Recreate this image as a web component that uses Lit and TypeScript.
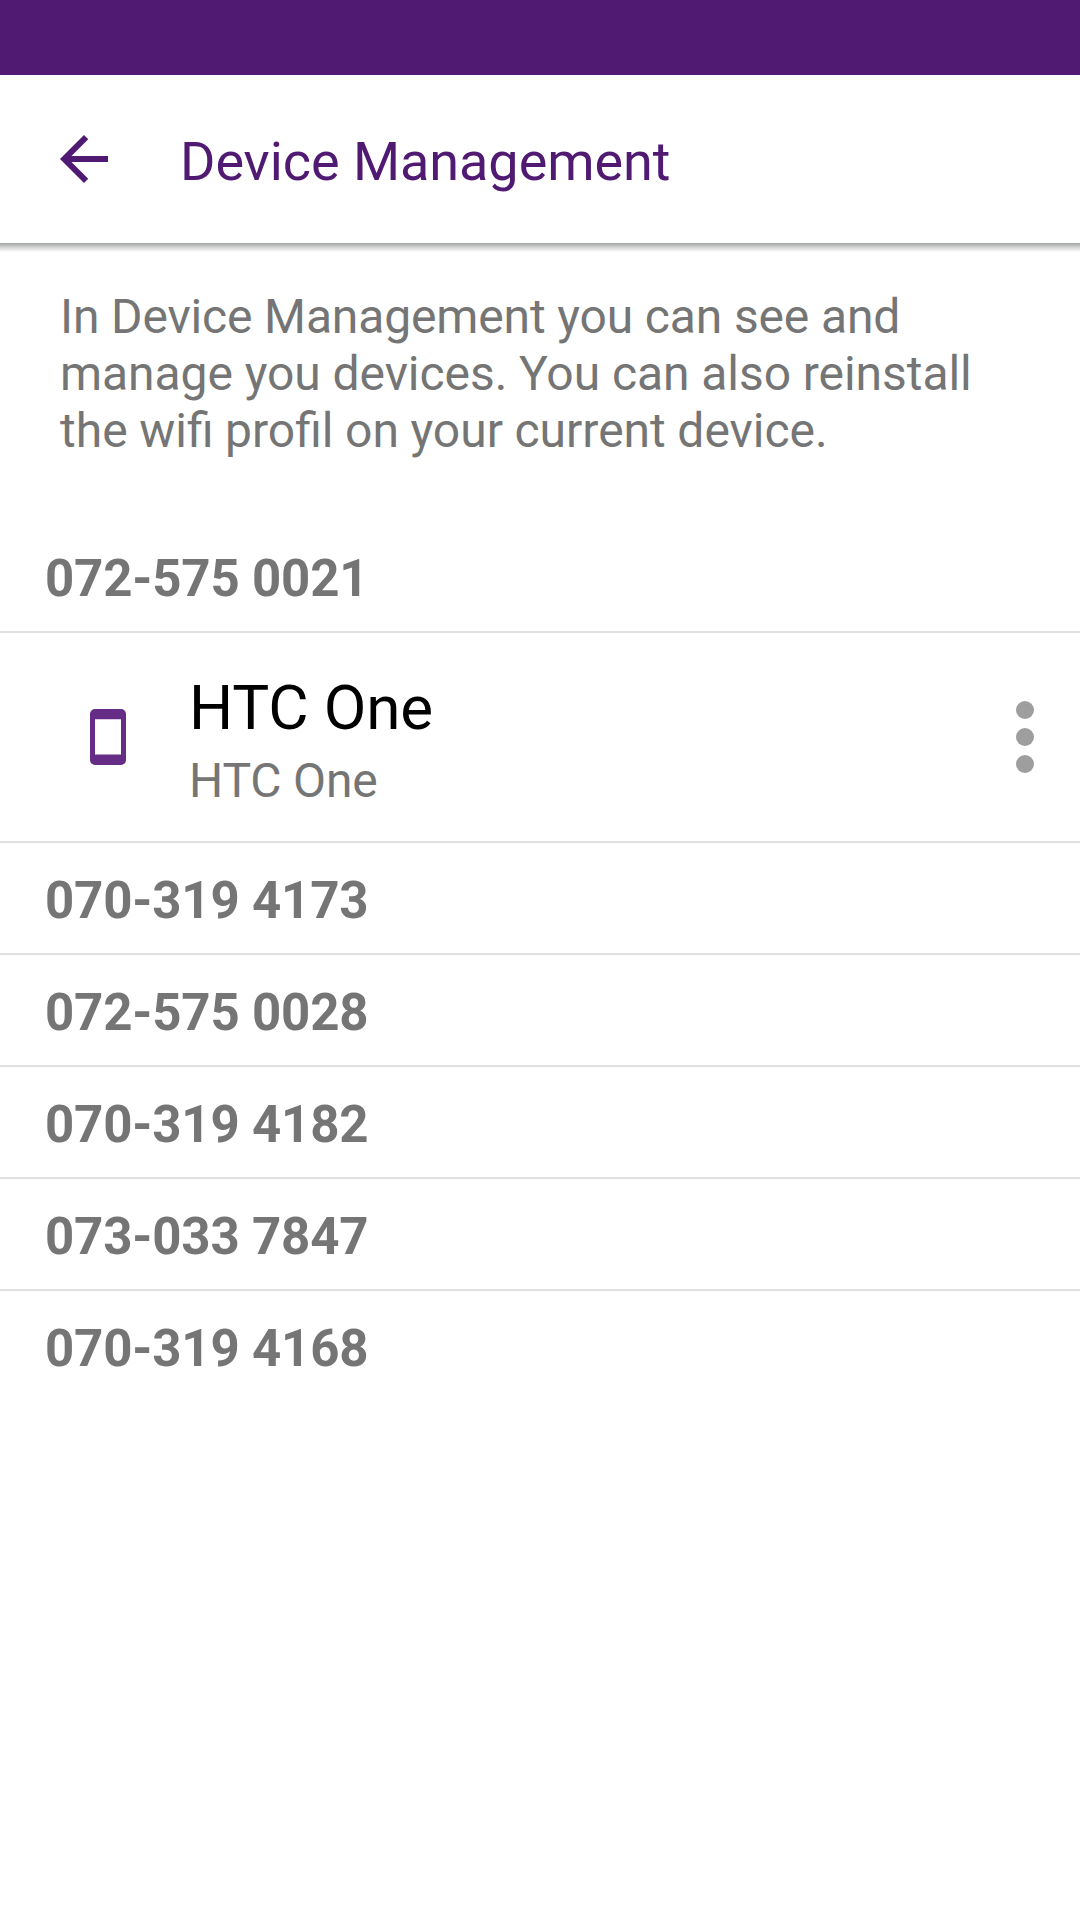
import { LitElement, html, css } from "lit";
import { customElement, state } from "lit/decorators.js";

interface Device {
  name: string;
  model: string;
}

interface Subscription {
  number: string;
  devices: Device[];
}

@customElement("app-root")
export class AppRoot extends LitElement {
  static styles = css`
    :host {
      display: flex;
      flex-direction: column;
      height: 1920px;
      background: #fff;
      color: #757575;
      font-family: Roboto, "Liberation Sans", sans-serif;
    }
    .status {
      height: 75px;
      flex: none;
      background: #501a72;
    }
    .toolbar {
      height: 168px;
      flex: none;
      display: flex;
      align-items: center;
      padding: 0 48px;
      box-sizing: border-box;
      background: #fff;
    }
    .back {
      width: 72px;
      height: 72px;
      flex: none;
      fill: #501a72;
    }
    .title {
      margin: 6px 0 0 60px;
      font-size: 54px;
      line-height: 72px;
      font-weight: 400;
      letter-spacing: -0.06px;
      color: #501a72;
      white-space: nowrap;
    }
    .shade {
      height: 9px;
      flex: none;
      background: linear-gradient(#a2a5a4, #d0d1d1 45%, #fff);
    }
    .intro {
      margin: 36px 60px 0;
      height: 233px;
      flex: none;
      font-size: 48px;
      line-height: 57px;
    }
    .line {
      display: block;
      white-space: nowrap;
    }
    .line-1 {
      letter-spacing: -0.14px;
    }
    .line-2 {
      letter-spacing: -0.06px;
    }
    .line-3 {
      word-spacing: -0.35px;
    }
    .number {
      height: 110px;
      box-sizing: border-box;
      padding: 28px 45px 0;
      margin: 0;
      font-size: 51px;
      line-height: 60px;
      font-weight: 700;
      letter-spacing: -0.17px;
    }
    .group + .group,
    .device {
      border-top: 2px solid #e0e0e0;
    }
    .device {
      display: flex;
      align-items: center;
      height: 210px;
      box-sizing: border-box;
      padding: 0 46px 0 90px;
    }
    .phone {
      width: 36px;
      height: 56px;
      flex: none;
    }
    .labels {
      flex: 1;
      margin-left: 63px;
      padding-top: 14px;
      letter-spacing: -0.15px;
    }
    .name {
      font-size: 62px;
      line-height: 74px;
      color: #000;
    }
    .model {
      font-size: 48px;
      line-height: 72px;
    }
    .more {
      width: 18px;
      height: 72px;
      flex: none;
      fill: #9e9e9e;
    }
  `;

  @state()
  private subscriptions: Subscription[] = [
    { number: "072-575 0021", devices: [{ name: "HTC One", model: "HTC One" }] },
    { number: "070-319 4173", devices: [] },
    { number: "072-575 0028", devices: [] },
    { number: "070-319 4182", devices: [] },
    { number: "073-033 7847", devices: [] },
    { number: "070-319 4168", devices: [] },
  ];

  private renderDevice(device: Device) {
    return html`
      <div class="device">
        <svg class="phone" viewBox="0 0 36 56">
          <path
            fill="#662d86"
            fill-rule="evenodd"
            d="M5 0H31A5 5 0 0 1 36 5V51A5 5 0 0 1 31 56H5A5 5 0 0 1 0 51V5A5 5 0 0 1 5 0ZM5 10.2V45.6H31V10.2Z"
          />
        </svg>
        <div class="labels">
          <div class="name">${device.name}</div>
          <div class="model">${device.model}</div>
        </div>
        <svg class="more" viewBox="0 0 18 72">
          <circle cx="9" cy="9" r="9" />
          <circle cx="9" cy="36" r="9" />
          <circle cx="9" cy="63" r="9" />
        </svg>
      </div>
    `;
  }

  render() {
    return html`
      <div class="status"></div>
      <header class="toolbar">
        <svg class="back" viewBox="0 0 24 24">
          <path d="M20 11H7.83l5.59-5.59L12 4l-8 8 8 8 1.41-1.41L7.83 13H20v-2z" />
        </svg>
        <h1 class="title">Device Management</h1>
      </header>
      <div class="shade"></div>
      <div class="intro">
        <span class="line line-1">In Device Management you can see and</span>
        <span class="line line-2">manage you devices. You can also reinstall</span>
        <span class="line line-3">the wifi profil on your current device.</span>
      </div>
      <main>
        ${this.subscriptions.map(
          (s) => html`
            <section class="group">
              <h2 class="number">${s.number}</h2>
              ${s.devices.map((d) => this.renderDevice(d))}
            </section>
          `
        )}
      </main>
    `;
  }
}
